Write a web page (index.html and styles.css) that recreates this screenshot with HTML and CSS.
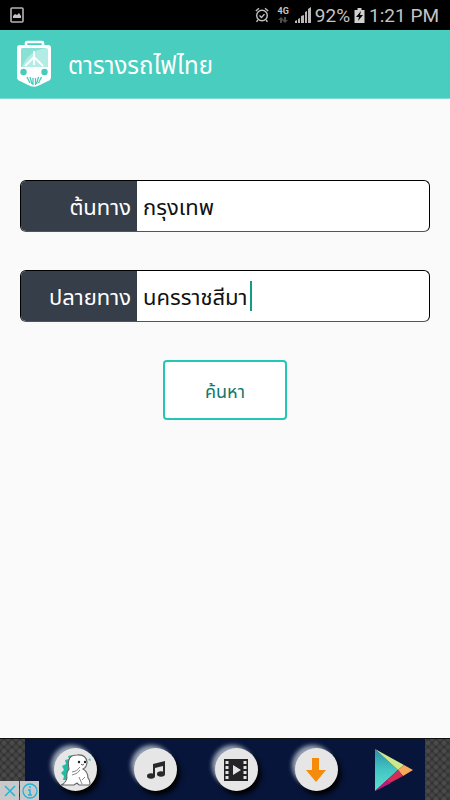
FILE: index.html
```html
<!DOCTYPE html>
<html lang="th">
<head>
<meta charset="utf-8">
<meta name="viewport" content="width=device-width, initial-scale=1">
<title>ตารางรถไฟไทย</title>
<link rel="stylesheet" href="styles.css">
</head>
<body>
<div class="status">
  <svg class="status-photo" width="14" height="16" viewBox="0 0 14 16"><rect x="1" y="1" width="12" height="14" rx="1" fill="none" stroke="#b4b4b4" stroke-width="1.6"/><path d="M3 11V9l2-2 2 1 2-2 2 3v2z" fill="#c4c4c4"/></svg>
  <div class="status-right">
    <svg width="14" height="16" viewBox="0 0 14 16" fill="none" stroke="#c0c0c0" stroke-width="1.4"><circle cx="7" cy="8.5" r="5.3"/><path d="M.8 4L4 1.3M13.2 4L10 1.3M3 13l-1.5 1.8M11 13l1.5 1.8M4.500 8.500l2 2 3-3.400"/></svg>
    <span class="network">4G<svg width="10" height="6" viewBox="0 0 10 6" fill="#4c4c4c"><path d="M2 6V3H0l3-3 3 3H4v3zM6 0v3H4l3 3 3-3H8V0z"/></svg></span>
    <svg width="16" height="16" viewBox="0 0 16 16" fill="#b8b8b8"><path d="M0 16v-2l2-1v3zM3 16v-4l2-1v5zM6 16v-7l3-1v8zM10 16V5l2-1v12zM13 16V2l3-2v16z"/></svg>
    <span>92%</span>
    <svg width="11" height="15" viewBox="0 0 10 15"><path d="M0 2h3V0h4v2h3v13H0z" fill="#d0d0d0"/><path d="M6.500 3L1.500 9h3l-1 4 5-6h-3z" fill="#000"/></svg>
    <span>1:21 PM</span>
  </div>
</div>
<header class="appbar">
  <svg class="train" width="36" height="48" viewBox="0 0 36 48">
    <path d="M10 6V3q0-1 1-1h15q1 0 1 1v3" fill="none" stroke="#fff" stroke-width="2.600"/>
    <path d="M4 5h28q3 0 3 3v29q0 3-3 4l-8 4q-6 3.500-12 0l-8-4q-3-1-3-4V8q0-3 3-3z" fill="#fff"/>
    <path d="M7 8h23q2 0 2 2v17H5V10q0-2 2-2z" fill="#b3ece4"/>
    <path d="M5 27V10q0-2 2-2h23Q12 11 6 27z" fill="#8be0d5"/>
    <path d="M18 11v14M18 17L9 26M18 17l9 9" fill="none" stroke="#fff" stroke-width="1.800"/>
    <circle cx="7.500" cy="32" r="3.200" fill="#46ccbc"/><circle cx="28.500" cy="32" r="3.200" fill="#46ccbc"/>
    <path d="M11 37l3 6M14 37l2 7M17 38v7M19.500 38v7M22.500 37l-2 7M25.500 37l-3 6" stroke="#46ccbc" stroke-width="1.300"/>
  </svg>
  <h1>ตารางรถไฟไทย</h1>
</header>
<main>
  <form class="search">
    <div class="field">
      <label for="from">ต้นทาง</label>
      <input id="from" type="text" value="กรุงเทพ">
    </div>
    <div class="field">
      <label for="to">ปลายทาง</label>
      <input id="to" type="text" value="นครราชสีมา">
      <span class="caret"></span>
    </div>
    <button class="submit" type="button">ค้นหา</button>
  </form>
</main>
<footer class="ad">
  <nav class="ad-panel">
    <a class="disc" href="#" aria-label="Dino"><svg width="32" height="34" viewBox="0 0 32 34"><path d="M13 2L8 3l1 3-4 1 1 4-4 2 2 4-3 3 3 3-1 4h8l4-22z" fill="#20bca4"/><path d="M1 32q5-2 6-7-1-6 2-9Q6 2 17 2q9-1 10 7 0 5-4 7 5 3 5 9 2 2 2 7H19l-2-2-3 2z" fill="#fff" stroke="#666" stroke-width="1.100"/><path d="M12 19q5 0 8-5M12 22q6-1 8-5M19 24l3 7M25 24l-3 3" fill="none" stroke="#888"/><circle cx="19" cy="9" r="1.200" fill="#222"/><circle cx="25" cy="9" r="1.200" fill="#222"/><path d="M21 11q1 2 3 0" fill="none" stroke="#555"/><path d="M28 7l2-2 1 3z" fill="#35c8bc"/></svg></a>
    <a class="disc" href="#" aria-label="Music"><svg width="18" height="18" viewBox="0 0 18 18"><path d="M6 3l12-3v13h-2V5L8 7v8H6z" fill="#29292b"/><ellipse cx="4" cy="15" rx="4" ry="2.800" fill="#29292b"/><ellipse cx="14" cy="13" rx="4" ry="2.800" fill="#29292b"/></svg></a>
    <a class="disc" href="#" aria-label="Video"><svg width="24" height="22" viewBox="0 0 24 22"><path d="M0 0h24v22H0z" fill="#242426"/><path d="M1.500 2h3v3h-3zm0 5h3v3h-3zm0 5h3v3h-3zm0 5h3v3h-3zM19.500 2h3v3h-3zm0 5h3v3h-3zm0 5h3v3h-3zm0 5h3v3h-3zM9 6l8 5-8 5z" fill="#e4e4e4"/></svg></a>
    <a class="disc" href="#" aria-label="Download"><svg width="22" height="24" viewBox="0 0 22 24"><path d="M7 0h7v12h7L11 24 1 12h6z" fill="#f58b0a"/></svg></a>
    <a class="play" href="#" aria-label="Play"><svg width="38" height="42" viewBox="0 0 38 42"><defs><linearGradient id="teal" x1="0" y1="0" x2="0" y2="1"><stop offset="0" stop-color="#2e8fa8"/><stop offset=".5" stop-color="#43c6c3"/><stop offset="1" stop-color="#5be3cd"/></linearGradient></defs><path d="M0 0l23 21L0 42z" fill="url(#teal)"/><path d="M0 0l29 16-6 5z" fill="#cce98b"/><path d="M29 16l9 5-10 6-5-6z" fill="#f8a85b"/><path d="M0 42l23-21 5 6z" fill="#d82c58"/><path d="M0 42l12-11 4 3z" fill="#b61c80"/></svg></a>
  </nav>
  <div class="ad-controls">
    <button type="button" aria-label="Close"><svg width="14" height="14" viewBox="0 0 14 14"><path d="M2 2l10 10M12 2L2 12" stroke="#20b5d8" stroke-width="1.500"/></svg></button>
    <button type="button" aria-label="Ad info"><svg width="16" height="16" viewBox="0 0 16 16" fill="none" stroke="#20b5d8"><circle cx="8" cy="8" r="7" stroke-width="1.300"/><path d="M6 7h2v5M6 12h4M8 3v2" stroke-width="1.500"/></svg></button>
  </div>
</footer>
</body>
</html>
```
FILE: styles.css
```css
* { box-sizing: border-box; }

body {
  margin: 0;
  min-height: 100vh;
  display: flex;
  flex-direction: column;
  background: #fafafa;
  font-family: Roboto, "Noto Sans Thai", "Noto Sans", sans-serif;
}

svg { display: block; flex: none; }

.status {
  height: 30px;
  padding: 0 11px 0 10px;
  display: flex;
  align-items: center;
  justify-content: space-between;
  background: #000;
  color: #c4c4c4;
  font-size: 19px;
}

.status-right { display: flex; align-items: center; gap: 4px; }

.network {
  display: flex;
  flex-direction: column;
  align-items: center;
  gap: 1px;
  margin: 0 2px 0 4px;
  font-size: 9px;
  line-height: 9px;
  font-weight: 700;
}

.appbar {
  height: 69px;
  padding: 0 16px;
  display: flex;
  align-items: center;
  gap: 16px;
  background: #48cdbe;
  border-bottom: 1px solid #83dcd2;
  color: #fff;
}

.appbar h1 {
  margin: 0;
  padding-top: 4px;
  font-size: 24px;
  line-height: 32px;
  font-weight: 400;
}

main { flex: 1; padding: 81px 20px 20px; }

.search { display: flex; flex-direction: column; align-items: center; gap: 38px; }

.field {
  width: 100%;
  height: 52px;
  display: flex;
  align-items: center;
  overflow: hidden;
  border: 1px solid #000;
  border-bottom-color: #555;
  border-radius: 6px;
  background: #fff;
  font-size: 22px;
}

.field label {
  flex: none;
  width: 116px;
  padding: 4px 6px 0 0;
  line-height: 50px;
  text-align: right;
  background: #363e49;
  color: #fff;
}

.field input {
  min-width: 0;
  height: 50px;
  padding: 4px 2px 0 6px;
  border: 0;
  outline: 0;
  background: none;
  color: #111;
  font: inherit;
  field-sizing: content;
}

.caret { flex: none; width: 2px; height: 30px; background: #159a87; }

.submit {
  width: 124px;
  height: 60px;
  padding: 4px 0 0;
  border: 2px solid #26c6b5;
  border-radius: 4px;
  background: #fff;
  color: #13796b;
  font: inherit;
  font-size: 18px;
}

.ad {
  position: relative;
  height: 62px;
  padding: 0 25px;
  border-top: 1px solid #111;
  background-color: #343434;
  background-image: radial-gradient(circle, #4b4b4b 30%, transparent 55%), radial-gradient(circle, #454545 30%, transparent 55%);
  background-size: 8px 8px;
  background-position: 0 0, 4px 4px;
}

.ad-panel {
  height: 100%;
  padding: 0 12px 0 29px;
  display: flex;
  align-items: center;
  justify-content: space-between;
  background: #07153a;
}

.disc {
  width: 43px;
  height: 43px;
  display: grid;
  place-items: center;
  border-radius: 50%;
  background: #e6e6e6;
  box-shadow: -4px -4px 4px -1px #9aa4b6, 3px 4px 5px #000;
}

.ad-controls { position: absolute; left: 0; bottom: 0; display: flex; gap: 1px; }

.ad-controls button {
  width: 19px;
  height: 19px;
  padding: 0;
  display: grid;
  place-items: center;
  border: 0;
  background: #c9c9c9;
}
```
